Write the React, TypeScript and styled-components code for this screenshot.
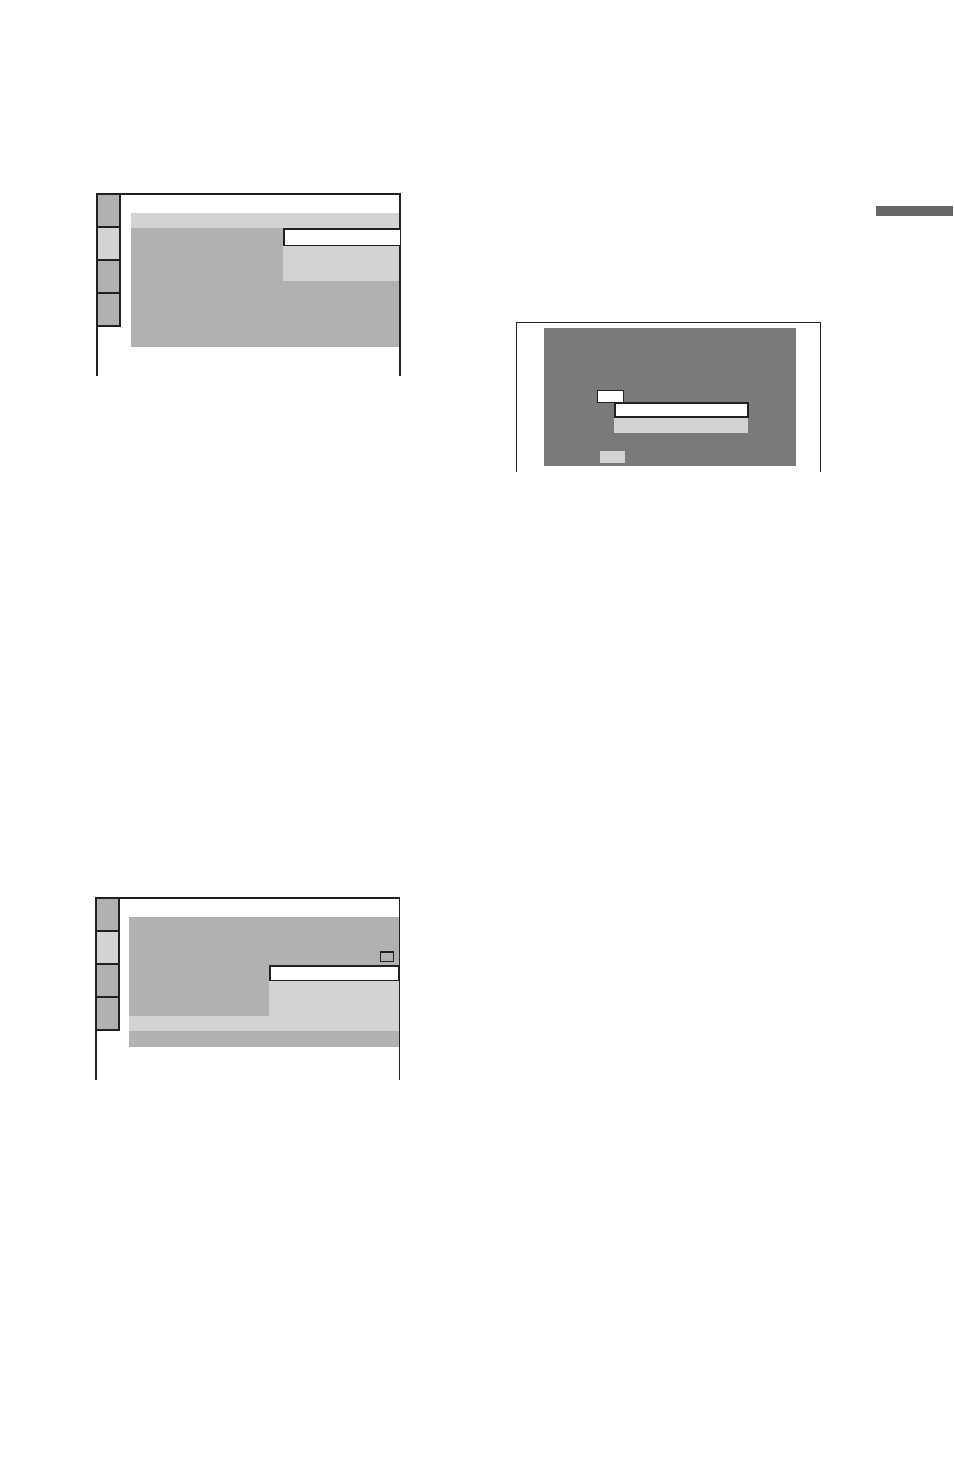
import { createGlobalStyle, styled } from 'styled-components';

const INK = '#231f20';
const DARK = '#b1b1b1';
const LIGHT = '#d3d3d3';

const GlobalStyle = createGlobalStyle`
    html, body {
        margin: 0;
        padding: 0;
        background: #ffffff;
        font-family: "Liberation Sans", Arial, sans-serif;
    }
`;

const TabColumn = ({ active }: { active: number }) => (
    <Tabs>
        {[0, 1, 2, 3].map((i) => (
            <Tab key={i} $active={i === active} />
        ))}
    </Tabs>
);

const SetupScreen = () => (
    <MenuFrame $width={305} $rightBorder={2}>
        <TabColumn active={1} />
        <Screen1>
            <HeaderBand />
            <ScreenBody $leftWidth={152}>
                <div />
                <div>
                    <SelectedRow $height={18} $overhang={2} />
                    <OptionBlock $height={35} />
                </div>
            </ScreenBody>
        </Screen1>
    </MenuFrame>
);

const PasswordScreen = () => (
    <DialogFrame>
        <DialogScreen>
            <Tag />
            <DialogList>
                <DialogSelected />
                <DialogOption />
            </DialogList>
            <DialogButton />
        </DialogScreen>
    </DialogFrame>
);

const AudioScreen = () => (
    <MenuFrame $width={305} $rightBorder={1}>
        <TabColumn active={1} />
        <Screen3>
            <ScreenBody $leftWidth={140}>
                <div />
                <RightPane>
                    <IconSlot>
                        <SmallIcon />
                    </IconSlot>
                    <SelectedRow $height={16} $overhang={0} />
                    <OptionBlock $height={35} />
                </RightPane>
            </ScreenBody>
            <Band $tone={LIGHT} $height={15} />
            <Band $tone={DARK} $height={16} />
        </Screen3>
    </MenuFrame>
);

const App = () => {
    return (
        <Page>
            <GlobalStyle />
            <LeftColumn>
                <SetupScreen />
                <LowerFigure>
                    <AudioScreen />
                </LowerFigure>
            </LeftColumn>
            <RightColumn>
                <PasswordScreen />
            </RightColumn>
            <SectionMarker />
        </Page>
    );
};

export default App;

const Page = styled.div`
    width: 954px;
    height: 1482px;
    display: flex;
    align-items: flex-start;
    background: #ffffff;
    overflow: hidden;
`;

const LeftColumn = styled.div`
    margin-left: 96px;
    margin-top: 193px;
    width: 305px;
    display: flex;
    flex-direction: column;
`;

const LowerFigure = styled.div`
    margin-top: 521px;
    margin-left: -1px;
`;

const RightColumn = styled.div`
    margin-left: 115px;
    margin-top: 322px;
    width: 305px;
`;

const SectionMarker = styled.div`
    margin-left: 55px;
    margin-top: 206px;
    width: 77px;
    height: 10px;
    background: #676567;
`;

const MenuFrame = styled.div<{ $width: number; $rightBorder: number }>`
    box-sizing: border-box;
    width: ${(p) => p.$width}px;
    height: 183px;
    display: flex;
    align-items: flex-start;
    border-top: 2px solid ${INK};
    border-left: 2px solid ${INK};
    border-right: ${(p) => p.$rightBorder}px solid ${INK};
`;

const Tabs = styled.div`
    width: 21px;
    border-right: 2px solid ${INK};
    display: flex;
    flex-direction: column;
`;

const Tab = styled.div<{ $active: boolean }>`
    height: 31px;
    border-bottom: 2px solid ${INK};
    background: ${(p) => (p.$active ? LIGHT : DARK)};
`;

const Screen1 = styled.div`
    flex: 1;
    margin-left: 10px;
    margin-top: 18px;
    height: 134px;
    background: ${DARK};
    display: flex;
    flex-direction: column;
`;

const Screen3 = styled.div`
    flex: 1;
    margin-left: 9px;
    margin-top: 18px;
    display: flex;
    flex-direction: column;
`;

const HeaderBand = styled.div`
    height: 15px;
    background: ${LIGHT};
`;

const ScreenBody = styled.div<{ $leftWidth: number }>`
    display: grid;
    grid-template-columns: ${(p) => p.$leftWidth}px 1fr;
    background: ${DARK};
`;

const RightPane = styled.div`
    display: flex;
    flex-direction: column;
`;

const IconSlot = styled.div`
    height: 48px;
    display: flex;
    justify-content: flex-end;
    align-items: flex-end;
    padding-right: 5px;
    padding-bottom: 3px;
    box-sizing: border-box;
`;

const SmallIcon = styled.div`
    box-sizing: border-box;
    width: 14px;
    height: 11px;
    border: 1px solid ${INK};
    border-top-width: 2px;
`;

const SelectedRow = styled.div<{ $height: number; $overhang: number }>`
    box-sizing: border-box;
    height: ${(p) => p.$height}px;
    margin-right: ${(p) => -p.$overhang}px;
    background: #ffffff;
    border: 1px solid ${INK};
    border-top-width: 2px;
    border-left-width: 2px;
`;

const OptionBlock = styled.div<{ $height: number }>`
    height: ${(p) => p.$height}px;
    background: ${LIGHT};
`;

const Band = styled.div<{ $tone: string; $height: number }>`
    height: ${(p) => p.$height}px;
    background: ${(p) => p.$tone};
`;

const DialogFrame = styled.div`
    box-sizing: border-box;
    width: 305px;
    height: 150px;
    border-top: 1px solid ${INK};
    border-left: 1px solid ${INK};
    border-right: 1px solid ${INK};
    padding-left: 27px;
    padding-top: 5px;
`;

const DialogScreen = styled.div`
    box-sizing: border-box;
    width: 252px;
    height: 138px;
    background: #7b7979;
    padding-left: 53px;
    padding-top: 62px;
    display: flex;
    flex-direction: column;
    align-items: flex-start;
`;

const Tag = styled.div`
    box-sizing: border-box;
    width: 27px;
    height: 13px;
    background: #ffffff;
    border: 1px solid ${INK};
`;

const DialogList = styled.div`
    margin-left: 17px;
    margin-top: -1px;
    width: 135px;
    display: flex;
    flex-direction: column;
`;

const DialogSelected = styled.div`
    box-sizing: border-box;
    height: 16px;
    background: #ffffff;
    border: 2px solid ${INK};
`;

const DialogOption = styled.div`
    width: 134px;
    height: 15px;
    background: ${LIGHT};
`;

const DialogButton = styled.div`
    margin-left: 3px;
    margin-top: 18px;
    width: 25px;
    height: 12px;
    background: ${LIGHT};
`;
